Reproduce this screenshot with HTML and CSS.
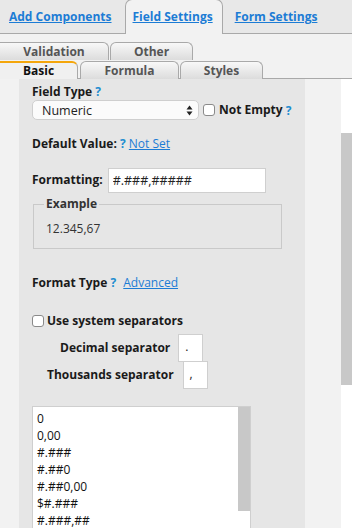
FILE: index.html
```html
<!DOCTYPE html>
<html>
<head>
  <title>Field Settings</title>
  <meta content="width=device-width, initial-scale=1" name="viewport" />
  <link rel="stylesheet" href="styles.css">
</head>
<body>
  <div class="topTabs">
    <a href="#" class="topTab">Add Components</a>
    <a href="#" class="topTab active">Field Settings</a>
    <a href="#" class="topTab">Form Settings</a>
  </div>

  <div class="subTabs">
    <div class="tabRow back">
      <span class="subTab first" style="width: 109px">Validation</span>
      <span class="subTab" style="width: 83px">Other</span>
    </div>
    <div class="tabRow front">
      <span class="subTab first selected" style="width: 78px">Basic</span>
      <span class="subTab" style="width: 99px">Formula</span>
      <span class="subTab" style="width: 83px">Styles</span>
    </div>
  </div>

  <div class="main">
    <div class="content">
      <div class="panel">
        <div class="label">Field Type <span class="help">?</span></div>
        <div class="typeRow">
          <div class="select">
            <span>Numeric</span>
            <svg width="7" height="11" viewBox="0 0 7 11"><path d="M3.5 0.5 L6.5 4.5 L0.5 4.5 Z M3.5 10.5 L6.5 6.5 L0.5 6.5 Z" fill="#222"/></svg>
          </div>
          <span class="check"></span>
          <span class="label">Not Empty</span>
          <span class="help">?</span>
        </div>

        <div class="label defaultRow">Default Value: <span class="help">?</span> <a href="#" class="link">Not Set</a></div>

        <div class="formatRow">
          <span class="label">Formatting:</span>
          <input type="text" class="formatInput" value="#.###,#####">
        </div>

        <fieldset class="example">
          <legend>Example</legend>
          <div class="exampleValue">12.345,67</div>
        </fieldset>

        <div class="label formatType">Format Type <span class="help">?</span> <a href="#" class="link">Advanced</a></div>

        <div class="sysRow">
          <span class="check"></span>
          <span class="label">Use system separators</span>
        </div>

        <div class="sepRow decimal">
          <span class="label">Decimal separator</span>
          <span class="sepBox">.</span>
        </div>
        <div class="sepRow thousands">
          <span class="label">Thousands separator</span>
          <span class="sepBox">,</span>
        </div>

        <div class="listBox">
          <div class="items">
            <div>0</div>
            <div>0,00</div>
            <div>#.###</div>
            <div>#.##0</div>
            <div>#.##0,00</div>
            <div>$#.###</div>
            <div>#.###,##</div>
            <div>#.###,00</div>
          </div>
          <div class="listScroll"><div class="listThumb"></div></div>
        </div>
      </div>
    </div>
    <div class="pageScroll"><div class="pageThumb"></div></div>
  </div>
</body>
</html>
```

FILE: styles.css
```css
body {
  margin: 0;
  font-family: "Open Sans", Arial, sans-serif;
  font-size: 12px;
  color: #222;
  background: #f2f2f2;
  height: 528px;
  overflow: hidden;
}
.topTabs {
  display: flex;
  align-items: flex-end;
  height: 34px;
  box-sizing: border-box;
  padding-left: 9px;
  background: #e8e8e8;
  border-bottom: 1px solid #a9a9a9;
  white-space: nowrap;
}
.topTab {
  color: #1c7cd5;
  font-weight: bold;
  font-size: 12px;
  height: 33px;
  line-height: 34px;
  margin-right: 13px;
}
.topTab.active {
  height: 33px;
  margin-bottom: -1px;
  margin-right: 12px;
  padding: 1px 9px 0 7px;
  background: #f2f2f2;
  border: 1px solid #a9a9a9;
  border-bottom: none;
  border-radius: 7px 7px 0 0;
  line-height: 32px;
}
.subTabs {
  padding-top: 8px;
  white-space: nowrap;
}
.tabRow {
  display: flex;
  height: 18px;
}
.tabRow.front {
  border-bottom: 1px solid #a9a9a9;
}
.subTab {
  box-sizing: border-box;
  height: 18px;
  margin-right: 1px;
  border: 1px solid #a9a9a9;
  border-bottom: none;
  border-radius: 6px 6px 0 0;
  background: linear-gradient(#f8f8f8, #dcdcdc);
  color: #555;
  font-weight: bold;
  font-size: 12px;
  line-height: 17px;
  text-align: center;
}
.subTab.first {
  border-left: none;
  border-top-left-radius: 0;
}
.tabRow.front .subTab {
  margin-top: 1px;
  height: 18px;
}
.subTab.selected {
  margin-top: 0;
  height: 19px;
  margin-bottom: -1px;
  border-top: 2px solid #f4a60c;
  background: #f0f0f0;
  color: #111;
  line-height: 16px;
  margin-right: 2px;
}
.main {
  display: flex;
}
.content {
  width: 341px;
  height: 450px;
}
.panel {
  margin-left: 19px;
  width: 286px;
  height: 450px;
  box-sizing: border-box;
  padding: 5px 0 0 13px;
  background: #e6e6e6;
}
.label {
  font-weight: bold;
  line-height: 16px;
  color: #1a1a1a;
}
.help {
  color: #1e8dd0;
  font-weight: bold;
}
.link {
  color: #1c7cd5;
  font-weight: normal;
}
.typeRow {
  display: flex;
  align-items: center;
  height: 20px;
}
.select {
  display: flex;
  align-items: center;
  justify-content: space-between;
  width: 167px;
  height: 20px;
  box-sizing: border-box;
  padding: 0 5px 0 9px;
  margin-right: 4px;
  background: #fbfbfb;
  border: 1px solid #cfcfcf;
  border-radius: 5px;
  color: #222;
  font-size: 12.5px;
}
.check {
  display: inline-block;
  width: 12px;
  height: 12px;
  box-sizing: border-box;
  background: #fff;
  border: 1px solid #8a8a8a;
  border-radius: 3px;
  margin-right: 4px;
}
.typeRow .help {
  margin-left: 3px;
}
.defaultRow {
  margin-top: 16px;
}
.formatRow {
  display: flex;
  align-items: center;
  margin-top: 16px;
  height: 24px;
}
.formatInput {
  margin-left: 5px;
  width: 158px;
  height: 25px;
  box-sizing: border-box;
  padding: 0 0 0 4px;
  border: 1px solid #cfcfcf;
  background: #fff;
  font-family: "Open Sans", Arial, sans-serif;
  font-size: 12.5px;
  color: #222;
}
.example {
  margin: 4px 0 0 1px;
  width: 249px;
  box-sizing: border-box;
  padding: 0 10px 11px 10px;
  border: 1px solid #c9c9c9;
}
.example legend {
  padding: 0 2px;
  font-weight: bold;
  line-height: 16px;
  color: #333;
}
.exampleValue {
  padding: 9px 0 0 2px;
  line-height: 16px;
  color: #333;
}
.formatType {
  margin-top: 26px;
}
.formatType .link {
  margin-left: 4px;
}
.sysRow {
  display: flex;
  align-items: center;
  margin-top: 22px;
  height: 16px;
}
.sysRow .check {
  margin-right: 3px;
}
.sepRow {
  display: flex;
  align-items: center;
  height: 27px;
}
.decimal {
  margin-top: 5px;
  padding-left: 28px;
}
.thousands {
  padding-left: 15px;
}
.sepBox {
  margin-left: 8px;
  width: 25px;
  height: 28px;
  box-sizing: border-box;
  padding-left: 6px;
  background: #fff;
  border: 1px solid #cfcfcf;
  line-height: 24px;
}
.thousands .sepBox {
  margin-left: 9px;
}
.listBox {
  display: flex;
  margin-top: 18px;
  width: 219px;
  height: 140px;
  box-sizing: border-box;
  background: #fff;
  border: 1px solid #cfcfcf;
}
.items {
  flex: 1;
  padding: 3px 0 0 4px;
  font-size: 12px;
  line-height: 17px;
  color: #111;
}
.listScroll {
  width: 12px;
}
.listThumb {
  height: 104px;
  background: #c8c8c8;
}
.pageScroll {
  width: 11px;
  height: 450px;
  background: #fff;
}
.pageThumb {
  margin-top: 54px;
  height: 252px;
  background: #c8c8c8;
}
```
